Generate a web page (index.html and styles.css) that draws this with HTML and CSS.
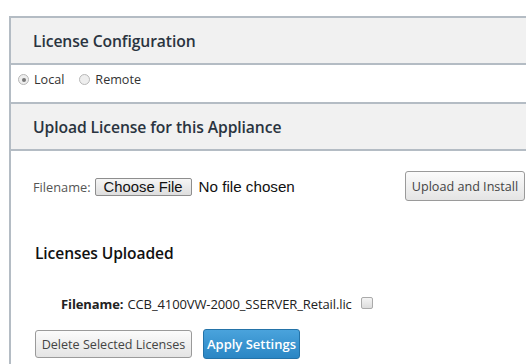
FILE: index.html
```html
<!DOCTYPE html>
<html>
<head>
<meta charset="utf-8">
<link rel="stylesheet" href="styles.css">
</head>
<body>
<div class="panel">
  <div class="head"><span>License Configuration</span></div>
  <div class="radios">
    <label class="radio"><span class="dot on"></span><span class="lbl local">Local</span></label>
    <label class="radio"><span class="dot"></span><span class="lbl">Remote</span></label>
  </div>
  <div class="head"><span>Upload License for this Appliance</span></div>
  <div class="upload">
    <div class="file">
      <span class="small">Filename:</span>
      <span class="choose">Choose File</span>
      <span class="nofile">No file chosen</span>
    </div>
    <span class="btn install">Upload and Install</span>
  </div>
  <div class="uploaded">
    <h3>Licenses Uploaded</h3>
    <div class="lic">
      <b>Filename:</b> CCB_4100VW-2000_SSERVER_Retail.lic <span class="check"></span>
    </div>
    <div class="actions">
      <span class="btn del">Delete Selected Licenses</span>
      <span class="btn apply">Apply Settings</span>
    </div>
  </div>
</div>
</body>
</html>
```

FILE: styles.css
```css
html, body { margin: 0; padding: 0; background: #fff; overflow: hidden; }
body { width: 526px; height: 364px; font-family: "Open Sans", "DejaVu Sans", sans-serif; color: #333; }
.panel {
  margin: 16px 0 0 9px;
  width: 540px;
  border-left: 2px solid #b4bcc4;
  border-top: 2px solid #b4bcc4;
  height: 360px;
}
.head {
  background: #f1f1f1;
  height: 45px;
  display: flex;
  align-items: center;
  padding-left: 22px;
  font-size: 15.7px;
  font-weight: 600;
  color: #2a3440;
  border-bottom: 2px solid #b4bcc4;
  letter-spacing: -0.1px;
}
.radios {
  height: 39px;
  display: flex;
  align-items: flex-start;
  padding: 6px 0 0 7px;
  box-sizing: border-box;
  border-bottom: 2px solid #b4bcc4;
  font-size: 12.6px;
  color: #333;
}
.radio { display: flex; align-items: center; margin-right: 15px; }
.dot {
  width: 9px; height: 9px; border-radius: 50%;
  border: 1px solid #b8b8b8; background: #eee;
  margin-right: 5px; position: relative;
}
.dot.on::after {
  content: ""; position: absolute; left: 2.5px; top: 2.5px;
  width: 4px; height: 4px; border-radius: 50%; background: #777;
}
.upload {
  display: flex;
  align-items: center;
  justify-content: space-between;
  width: 514px;
  padding: 20px 0 0 22px;
  box-sizing: border-box;
}
.file { display: flex; align-items: center; margin-top: 1px; }
.small { font-size: 12.8px; color: #555; margin-right: 4px; letter-spacing: 0; }
.choose {
  font-family: "Liberation Sans", Arial, sans-serif;
  font-size: 14.8px; color: #111;
  border: 1px solid #8e8e8e; border-radius: 2px;
  background: linear-gradient(#f6f6f6, #dedede);
  padding: 0 8px; margin-right: 7px;
}
.nofile { font-family: "Liberation Sans", Arial, sans-serif; font-size: 15.2px; color: #111; }
.btn {
  display: inline-flex; align-items: center; justify-content: center;
  font-size: 12.6px; border-radius: 3px; box-sizing: border-box;
}
.install {
  width: 120px; height: 30px; color: #444;
  border: 1px solid #9a9a9a;
  background: linear-gradient(#fbfbfb, #e4e4e4);
}
.uploaded { padding: 42px 0 0 24px; }
h3 { margin: 0; font-size: 15.6px; font-weight: 600; color: #111; height: 20px; line-height: 20px; letter-spacing: -0.1px; }
.lic { margin: 32px 0 0 26px; font-size: 13px; color: #222; display: flex; align-items: center; gap: 4px; letter-spacing: -0.1px; }
.lic b { font-weight: 700; }
.check {
  width: 10px; height: 10px; border: 1px solid #aaa; border-radius: 2px;
  background: linear-gradient(#f4f4f4, #dcdcdc); margin-left: 5px; margin-top: -3px;
}
.actions { display: flex; gap: 11px; margin-top: 16px; }
.del {
  width: 157px; height: 28px; color: #444;
  border: 1px solid #9a9a9a;
  background: linear-gradient(#fbfbfb, #e4e4e4);
  margin-top: 1px;
}
.apply {
  width: 97px; height: 30px; color: #fff; font-weight: 600; font-size: 13px;
  border: 1px solid #2473a8;
  background: linear-gradient(#4aa3dc, #2a86c4);
}
```
